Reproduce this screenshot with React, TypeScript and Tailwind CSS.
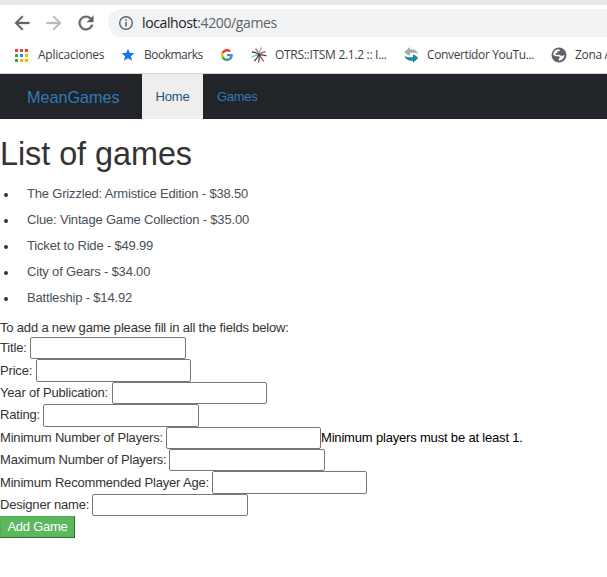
import type { ReactNode } from "react";

const games = [
  "The Grizzled: Armistice Edition - $38.50",
  "Clue: Vintage Game Collection - $35.00",
  "Ticket to Ride - $49.99",
  "City of Gears - $34.00",
  "Battleship - $14.92",
];

const fields = [
  { label: "Title:", labelWidth: "w-[30px]", inputWidth: "w-[156px]" },
  { label: "Price:", labelWidth: "w-[36px]", inputWidth: "w-[155px]" },
  { label: "Year of Publication:", labelWidth: "w-[112px]", inputWidth: "w-[155px]" },
  { label: "Rating:", labelWidth: "w-[43px]", inputWidth: "w-[156px]" },
  { label: "Minimum Number of Players:", labelWidth: "w-[166px]", inputWidth: "w-[155px]", error: "Minimum players must be at least 1." },
  { label: "Maximum Number of Players:", labelWidth: "w-[169px]", inputWidth: "w-[156px]" },
  { label: "Minimum Recommended Player Age:", labelWidth: "w-[212px]", inputWidth: "w-[155px]" },
  { label: "Designer name:", labelWidth: "w-[92px]", inputWidth: "w-[156px]" },
];

function AppsIcon() {
  const colors = ["#ea4335", "#ea4335", "#ea4335", "#34a853", "#1a8cff", "#fbb400", "#34a853", "#fbb400", "#fbb400"];
  return (
    <svg width="13" height="13" viewBox="0 0 13 13" shapeRendering="crispEdges">
      {colors.map((c, i) => (
        <rect key={i} x={(i % 3) * 5} y={Math.floor(i / 3) * 5} width="3" height="3" fill={c} />
      ))}
    </svg>
  );
}

function GoogleIcon() {
  return (
    <svg width="12" height="12" viewBox="0 0 48 48">
      <path fill="#EA4335" d="M24 9.5c3.54 0 6.71 1.22 9.21 3.6l6.85-6.85C35.9 2.38 30.47 0 24 0 14.62 0 6.51 5.38 2.56 13.22l7.98 6.19C12.43 13.72 17.74 9.5 24 9.5z" />
      <path fill="#4285F4" d="M46.98 24.55c0-1.57-.15-3.09-.38-4.55H24v9.02h12.94c-.58 2.96-2.26 5.48-4.78 7.18l7.73 6c4.51-4.18 7.09-10.36 7.09-17.65z" />
      <path fill="#FBBC05" d="M10.53 28.59c-.48-1.45-.76-2.99-.76-4.59s.27-3.14.76-4.59l-7.98-6.19C.92 16.46 0 20.12 0 24c0 3.88.92 7.54 2.56 10.78l7.97-6.19z" />
      <path fill="#34A853" d="M24 48c6.48 0 11.93-2.13 15.89-5.81l-7.73-6c-2.15 1.45-4.92 2.3-8.16 2.3-6.26 0-11.57-4.22-13.47-9.91l-7.98 6.19C6.51 42.62 14.62 48 24 48z" />
    </svg>
  );
}

function OtrsIcon() {
  return (
    <svg width="16" height="16" viewBox="0 0 16 16" fill="none" strokeWidth="1.3">
      <path d="M8 8Q7 4 4.5 1.5" stroke="#c9606a" />
      <path d="M8 8Q8.5 3.5 10.5.5" stroke="#5bb8c9" />
      <path d="M8 8Q11 5 14.5 4.5" stroke="#c5505a" />
      <path d="M8 8Q5 5 1 5" stroke="#444850" />
      <path d="M8 8Q4 8 .5 10.5" stroke="#75bfcd" />
      <path d="M8 8Q12 7.5 15.5 9" stroke="#343940" />
      <path d="M8 8Q6 11 3.5 14" stroke="#3a3f46" />
      <path d="M8 8Q8.5 12 7.5 15.5" stroke="#555b64" />
      <path d="M8 8Q11 11 12.5 14.5" stroke="#bd3444" />
      <circle cx="8" cy="8" r="1.2" fill="#343840" />
    </svg>
  );
}

function ConverterIcon() {
  return (
    <svg width="15" height="16" viewBox="0 0 15 16">
      <path d="M.5 4.7 6 0v2.3c4.7 0 7.4 1.6 8 4.7-2-1.3-4.4-1.5-8-1.2v2.6C3.5 8 1.4 6.7.5 4.7Z" fill="#a9acad" />
      <path d="M14 11.2 9 16v-2.2C4.6 14 1.4 12.4.6 9c2 1.2 4.7 1.5 8.4 1.1V7.5c2.1.5 4 1.7 5 3.7Z" fill="#188ba0" />
    </svg>
  );
}

function GlobeIcon() {
  return (
    <svg width="18" height="18" viewBox="0 0 24 24" fill="#5f6368">
      <circle cx="12" cy="12" r="10" />
      <path
        fill="#fff"
        d="M4.2 12c0-3.7 2.5-6.8 6-7.6L13.5 5 12.6 7H9.8v2.2H7.4v2.4h5.4l1.2 1.2h3.3l1.9-1.4c.3 3.6-2.3 7.4-6.6 8.1l-.9-.2V17l1.6-1.6-1.6-1.6H8.2L4.2 12Z"
      />
      <path d="M7 4.9 10.4 4l4.4 1-1 2.8h-2.6v2.3H8.8v1.2h4.5l1.4 1.4h3.1l1.7-1.2V6.8L16 4H9Z" />
    </svg>
  );
}

function Bookmark({ icon, label, iconClass, labelClass }: { icon: ReactNode; label?: string; iconClass: string; labelClass?: string }) {
  return (
    <div className="flex h-full shrink-0 items-center">
      <span className={`flex shrink-0 items-center ${iconClass}`}>{icon}</span>
      {label && <span className={`shrink-0 whitespace-nowrap ${labelClass}`}>{label}</span>}
    </div>
  );
}

function BrowserChrome() {
  return (
    <header className="h-[74px] w-full overflow-hidden border-b border-[#d3d5d8] bg-white font-['Open_Sans','Noto_Sans',sans-serif]">
      <div className="h-[5px] bg-[#e4e8eb]" />
      <div className="flex h-[36px] items-center pl-[11px]">
        <svg width="22" height="22" viewBox="0 0 24 24" fill="#5f6368" stroke="#5f6368" strokeWidth=".4">
          <path d="M20 11H7.83l5.59-5.59L12 4l-8 8 8 8 1.41-1.41L7.83 13H20v-2z" />
        </svg>
        <svg className="ml-[10px]" width="22" height="22" viewBox="0 0 24 24" fill="#babcbe" stroke="#babcbe" strokeWidth=".4">
          <path d="m12 4-1.41 1.41L16.17 11H4v2h12.17l-5.58 5.59L12 20l8-8z" />
        </svg>
        <svg className="ml-[10px]" width="22" height="22" viewBox="0 0 24 24" fill="#5f6368" stroke="#5f6368" strokeWidth=".4">
          <path d="M17.65 6.35C16.2 4.9 14.21 4 12 4c-4.42 0-7.99 3.58-7.99 8s3.57 8 7.99 8c3.73 0 6.84-2.55 7.73-6h-2.08c-.82 2.33-3.04 4-5.65 4-3.31 0-6-2.69-6-6s2.69-6 6-6c1.66 0 3.14.69 4.22 1.78L13 11h7V4l-2.35 2.35z" />
        </svg>
        <div className="ml-[11px] flex h-[28px] flex-1 items-center rounded-l-full bg-[#f1f3f4] pl-[10px]">
          <svg width="16" height="16" viewBox="0 0 16 16" fill="none" stroke="#5f6368" strokeWidth="1.4">
            <circle cx="8" cy="8" r="6.3" />
            <path d="M8 7v4.5M8 4.3v1.5" strokeWidth="1.6" />
          </svg>
          <span className="ml-[8px] whitespace-nowrap text-[14px] tracking-[-0.38px] text-[#5f6368]">
            <span className="text-[#202124]">localhost</span>:4200/games
          </span>
        </div>
      </div>
      <div className="flex h-[28px] items-center overflow-hidden pl-[15px] text-[12px] text-[#3c4043]">
        <Bookmark icon={<AppsIcon />} label="Aplicaciones" iconClass="w-[23px]" labelClass="w-[82px] tracking-[-0.25px]" />
        <Bookmark
          icon={
            <svg width="14" height="14" viewBox="1 1 22 22" fill="#1a73e8">
              <path d="M12 17.27 18.18 21l-1.64-7.03L22 9.24l-7.19-.61L12 2 9.19 8.63 2 9.24l5.46 4.73L5.82 21z" />
            </svg>
          }
          label="Bookmarks"
          iconClass="w-[24px] pl-[1px]"
          labelClass="w-[77px] tracking-[-0.5px]"
        />
        <Bookmark icon={<GoogleIcon />} iconClass="w-[30px]" />
        <Bookmark icon={<OtrsIcon />} label="OTRS::ITSM 2.1.2 :: I..." iconClass="w-[24px]" labelClass="w-[128px] tracking-[-0.3px]" />
        <Bookmark icon={<ConverterIcon />} label="Convertidor YouTu..." iconClass="w-[24px] pl-[1px]" labelClass="w-[123px] tracking-[-0.37px]" />
        <Bookmark icon={<GlobeIcon />} label="Zona A" iconClass="w-[25px]" labelClass="tracking-[-0.35px]" />
      </div>
    </header>
  );
}

export default function App() {
  return (
    <div className="h-[577px] w-full overflow-hidden bg-white font-['Liberation_Sans',Arial,sans-serif] text-[13px] leading-[18px] tracking-[-0.18px] text-[#333]">
      <BrowserChrome />
      <nav className="flex h-[45px] bg-[#212529] text-[#337ab7]">
        <a className="flex w-[142px] items-center pl-[27px] pt-[1px] text-[16.2px] tracking-normal">MeanGames</a>
        <a className="flex w-[61px] items-center justify-center bg-[#eee] text-[#23527c]">Home</a>
        <a className="flex items-center pl-[14px] tracking-[-0.3px]">Games</a>
      </nav>
      <main>
        <h1 className="mt-[17px] h-[36px] text-[32.4px] leading-[36px] tracking-[-0.05px]">List of games</h1>
        <ul className="mt-[9px]">
          {games.map((game) => (
            <li key={game} className="flex h-[26px] items-center">
              <span className="ml-[4px] mr-[19px] mt-[2px] size-[4px] rounded-full bg-[#333]" />
              <span className="whitespace-nowrap text-[#495057]">{game}</span>
            </li>
          ))}
        </ul>
        <form className="mt-[8px]">
          <p className="h-[18px]">To add a new game please fill in all the fields below:</p>
          {fields.map((field) => (
            <div key={field.label} className="flex h-[22.4px] items-center whitespace-nowrap">
              <label className={`shrink-0 ${field.labelWidth}`}>{field.label}</label>
              <input className={`h-[22.4px] shrink-0 rounded-[2px] border border-[#767676] bg-white px-1 ${field.inputWidth}`} />
              {field.error && <span className="text-black">{field.error}</span>}
            </div>
          ))}
          <button type="button" className="block h-[22px] w-[75px] border border-t-[#4fae4f] border-l-[#4fae4f] border-r-[#2c6b2c] border-b-[#2c6b2c] bg-[#5cb85c] tracking-[-0.25px] text-white">
            Add Game
          </button>
        </form>
      </main>
    </div>
  );
}
